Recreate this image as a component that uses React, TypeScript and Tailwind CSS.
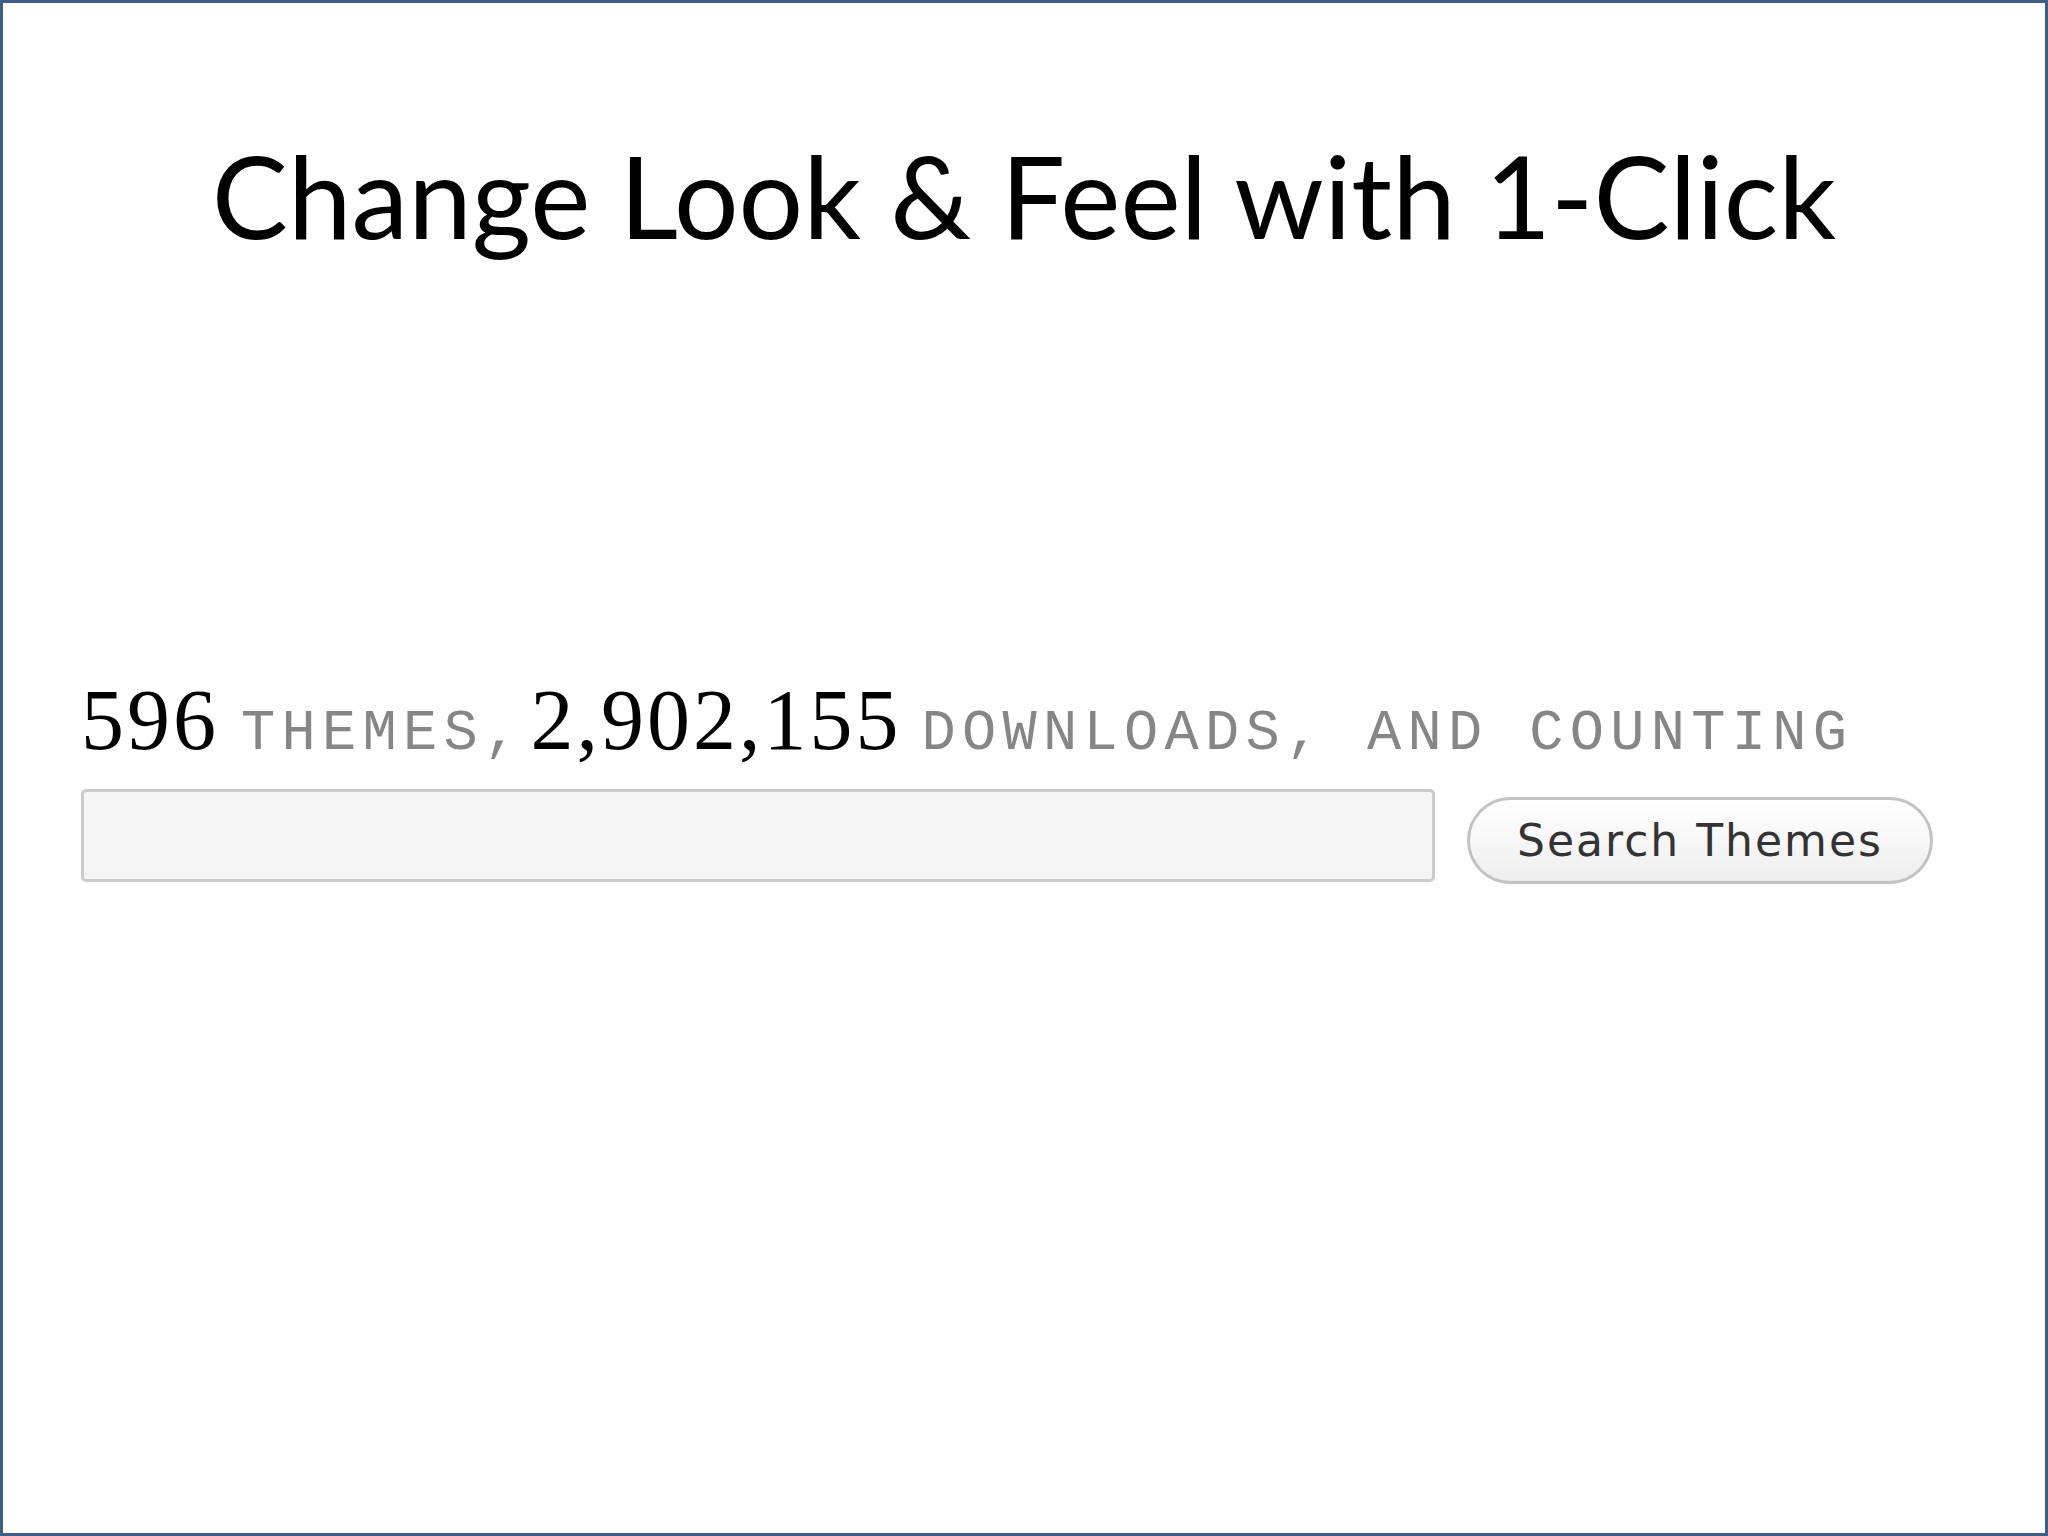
const Stat = ({ value }: { value: string }) => (
  <span className="font-['Liberation_Serif',serif] text-[86px] tracking-[3px] text-black">{value}</span>
)

const Label = ({ text }: { text: string }) => (
  <span className="font-['Liberation_Mono',monospace] text-[57px] text-[#868686] tracking-[6.3px]">{text}</span>
)

export default function App() {
  return (
    <div className="w-[2048px] h-[1536px] bg-[#fefffe] border-[3px] border-[#3e5c8c] flex flex-col">
      <h1 className="pt-[135px] text-center font-['Lato',sans-serif] text-[114px] leading-none text-black">
        Change Look &amp; Feel with 1-Click
      </h1>

      <div className="mt-[425px] pl-[78px] pr-[110px]">
        <p className="leading-none whitespace-nowrap flex items-baseline">
          <Stat value="596" />
          <span className="ml-[22px]"><Label text="THEMES," /></span>
          <span className="ml-[6px]"><Stat value="2,902,155" /></span>
          <span className="ml-[20px]"><Label text="DOWNLOADS, AND COUNTING" /></span>
        </p>

        <div className="mt-[24px] flex items-center gap-[32px]">
          <input
            type="text"
            aria-label="Search themes"
            className="w-[1354px] h-[93px] bg-[#f5f5f5] border-[3px] border-[#cccccc] rounded-[5px] outline-none"
          />
          <button className="h-[87px] w-[466px] rounded-full border-[3px] border-[#c2c2c2] bg-gradient-to-b from-white to-[#eeeeee] font-['DejaVu_Sans',sans-serif] text-[44px] text-[#333333] tracking-[2px] mt-[10px]">
            Search Themes
          </button>
        </div>
      </div>
    </div>
  )
}
